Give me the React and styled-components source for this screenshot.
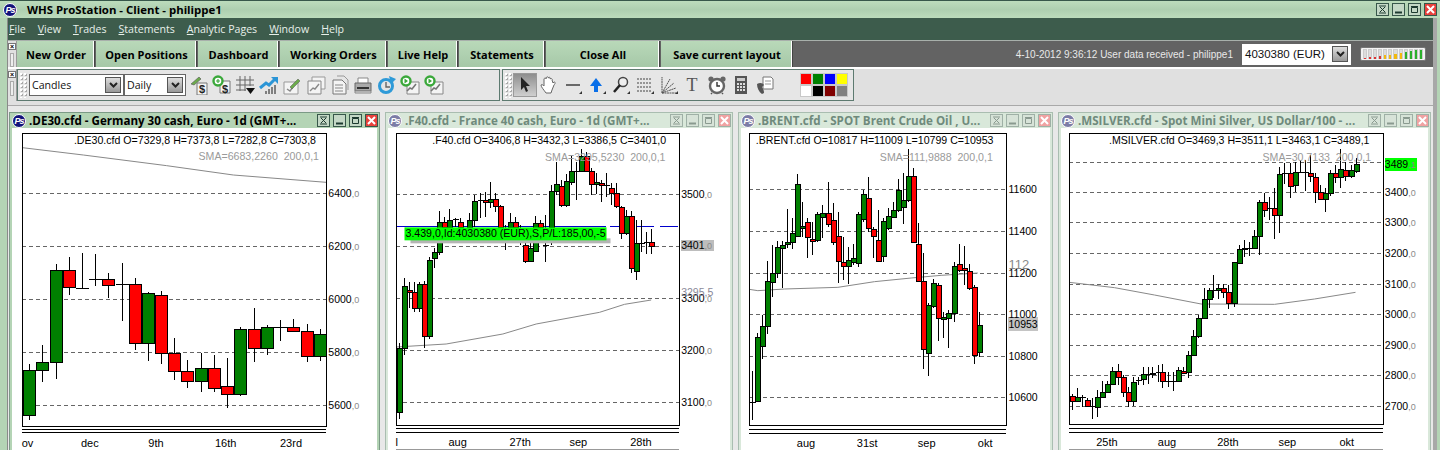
import React from "react";
import styled, { createGlobalStyle } from "styled-components";

const Global = createGlobalStyle`
  html, body { margin: 0; padding: 0; background: #e6e6e6; overflow: hidden; }
  * { box-sizing: border-box; }
`;
const UI = `"Open Sans", "Noto Sans", sans-serif`;
const ARIAL = `"Liberation Sans", Arial, sans-serif`;

const Shell = styled.div`
  width: 1440px; height: 450px; overflow: hidden; display: flex; flex-direction: column;
  background: #b4d4b5; border-top: 1px solid #37574a;
`;
const TitleBar = styled.div`
  height: 17px; flex: none; display: flex; align-items: center; padding: 0 3px 0 3px;
  background: linear-gradient(#bcdcbc, #aecfb0 50%, #bcdcbc);
`;
const AppTitle = styled.div`
  font: 700 11.4px ${UI}; color: #000; margin-left: 10px; flex: 1; white-space: nowrap;
`;
const PsBadge = styled.div`
  width: 14px; height: 14px; flex: none; border-radius: 50%;
  background: ${p => (p.$dim ? "#7c7ca6" : "#12127a")}; color: #fff; border: 1px solid #fff;
  font: italic 700 9px/12px ${ARIAL}; text-align: center; letter-spacing: -1px;
`;
const Controls = styled.div`display: flex; gap: 3px; flex: none;`;
const Ctl = styled.div`
  width: 13px; height: 13px; display: flex; align-items: center; justify-content: center;
  border: 1px solid ${p => (p.$dim ? "#9fb0a6" : "#37574a")};
  background: ${p => (p.$close ? (p.$dim ? "#f0a2a2" : "#e8413c") : p.$dim ? "#d7e3d8" : "#c4d8c6")};
  svg { display: block; }
`;
const Frame = styled.div`
  flex: 1; min-height: 0; display: flex; flex-direction: column; margin: 0 3px 0 7px;
  border-right: 4px solid #a8a8a8; border-left: 1px solid #8a8a8a; background: #e6e6e6;
`;
const MenuBar = styled.div`
  height: 23px; flex: none; background: #3d5c4c; display: flex; align-items: center;
  padding-left: 1px; gap: 12px; color: #e8f0ea; font: 400 10.6px ${UI};
  border-bottom: 1px solid #a8b0ab;
  u { text-underline-offset: 1px; }
`;
const ButtonBar = styled.div`
  height: 28px; flex: none; background: #636363; display: flex; align-items: stretch;
  border-bottom: 2px solid #fff;
`;
const Grip = styled.div`
  width: 9px; flex: none; background: #e0e0e0; border-right: 1px solid #9a9a9a; position: relative;
  display: flex; flex-direction: column; align-items: center; gap: 3px; padding-top: 2px;
`;
const GripX = styled.div`
  width: 8px; height: 7px; border: 1px solid #777; background: #fff; font: 700 7px/5px ${ARIAL}; text-align: center; color: #000;
`;
const GripBar = styled.div`width: 4px; flex: 1; max-height: 15px; border: 1px solid #aaa; background: #eee;`;
const TabBtn = styled.div`
  width: ${p => p.$w}px; flex: none; margin-right: 2px; display: flex; align-items: center; justify-content: center;
  background: linear-gradient(#b9d9b9, #a6c8a8); color: #000; font: 700 11px ${UI};
  border-right: 1px solid #fff; box-shadow: 1px 0 0 #444; white-space: nowrap; padding: 1px 0 0 2px;
`;
const Status = styled.div`
  flex: 1; display: flex; align-items: center; justify-content: flex-end; padding-right: 7px; gap: 9px;
  color: #e9e9e9; font: 400 10px ${ARIAL}; white-space: nowrap;
`;
const Combo = styled.div`
  display: flex; align-items: center; justify-content: space-between; background: #fff; color: #111;
  width: ${p => p.$w}px; height: ${p => p.$h || 21}px; padding: 0 2px 0 2px;
  font: 400 ${p => (p.$arial ? "11.5px" : "10.6px")} ${p => (p.$arial ? ARIAL : UI)};
  border: 1px solid ${p => (p.$line ? "#666" : "#fff")}; flex: none;
`;
const ComboArrow = styled.div`
  width: 16px; height: 16px; flex: none; border: 1px solid #555; background: linear-gradient(#ddd, #999);
  display: flex; align-items: center; justify-content: center;
`;
const Meter = styled.div`
  width: 66px; height: 14px; flex: none; background: #f3f3f3; border: 1px solid #777; border-radius: 2px;
  display: flex; gap: 1px; align-items: flex-end; padding: 1px 2px;
`;
const MeterBar = styled.div`
  flex: 1; height: 100%; background: linear-gradient(to top, ${p => p.$c} ${p => p.$l}%, #ddd ${p => p.$l}%); border: 1px solid #ccc; border-bottom: 0;
`;
const ToolRow = styled.div`
  height: 34px; flex: none; display: flex; background: #e0e0e0; align-items: stretch; padding-bottom: 2px;
`;
const ToolPanel = styled.div`
  width: ${p => p.$w}px; flex: none; display: flex; align-items: center; background: #e6e6e6;
  border: 1px solid #5d7a70; margin-right: 2px; padding-left: 1px;
`;
const Dots = styled.div`
  width: 8px; height: 26px; flex: none; margin-right: ${p => p.$mr}px;
  background-image: radial-gradient(#fff 0.8px, transparent 1px), radial-gradient(#aaa 0.8px, transparent 1px);
  background-size: 4px 4px; background-position: 0 0, 1px 1px;
`;
const Icons = styled.div`display: flex; align-items: center; gap: ${p => p.$gap}px; margin-left: ${p => p.$ml}px;`;
const IconCell = styled.div`
  width: 20px; height: 20px; flex: none; display: flex; align-items: center; justify-content: center;
`;
const Pressed = styled.div`
  width: 24px; height: 24px; flex: none; display: flex; align-items: center; justify-content: center; margin-right: 2px;
  background: linear-gradient(#8e8e8e, #cfcfcf); border: 1px solid #9a9a9a;
`;
const Swatches = styled.div`
  display: grid; grid-template-columns: repeat(4, 10px); grid-auto-rows: 10px; gap: 2px; margin-left: 25px; padding: 1px; background: #c8c8c8;
`;
const Swatch = styled.div`background: ${p => p.$c}; `;
const Gutter = styled.div`
  height: 3px; flex: none; background: #e0e0e0; border-bottom: 1px solid #a9a9a9;
`;
const Workspace = styled.div`
  flex: 1; min-height: 0; display: flex; gap: 5px; padding: 6px 0 0 1px; background: #e8e8e8; align-items: flex-start;
`;
const Win = styled.div`
  width: ${p => p.$w}px; height: 360px; flex: none; display: flex; flex-direction: column;
  background: ${p => (p.$active ? "#b4d4b5" : "#d9e8da")}; border: 1px solid ${p => (p.$active ? "#7b9a86" : "#a9bdb0")}; border-bottom: 0;
`;
const WinTitle = styled.div`
  height: 15px; flex: none; display: flex; align-items: center; padding: 0 1px 0 2px;
`;
const WinText = styled.div`
  flex: 1; margin-left: 3px; font: 700 11.6px ${UI}; white-space: nowrap; overflow: hidden;
  color: ${p => (p.$active ? "#000" : "#6f8a7c")};
`;
const WinBody = styled.div`flex: 1; margin: 0 2px; background: #fff;`;
const ChartSvg = styled.svg`display: block; overflow: hidden;`;
const T = styled.text`font: 400 ${p => p.$s || 10.6}px ${ARIAL}; fill: ${p => p.$c || "#000"}; white-space: pre;`;

const down = <svg width="9" height="7" viewBox="0 0 9 7"><path d="M1 1l3.5 3.5L8 1" fill="none" stroke="#222" strokeWidth="2" /></svg>;
const CtlGlyph = ({ k, c }) => {
  if (k === 0) return <svg width="9" height="9" viewBox="0 0 9 9"><path d="M1 1h7M1 8h7M2 2l5 5M7 2L2 7" stroke={c} fill="none" /></svg>;
  if (k === 1) return <svg width="9" height="9" viewBox="0 0 9 9"><path d="M1 7.5h7" stroke={c} strokeWidth="2" /></svg>;
  if (k === 2) return <svg width="9" height="9" viewBox="0 0 9 9"><path d="M1.5 2.5h6v5h-6zM1 1.5h7" stroke={c} fill="none" /></svg>;
  return <svg width="9" height="9" viewBox="0 0 9 9"><path d="M1 1l7 7M8 1L1 8" stroke="#fff" strokeWidth="2" /></svg>;
};
const WinControls = ({ dim }) => (
  <Controls>
    {[0, 1, 2, 3].map(k => (
      <Ctl key={k} $dim={dim} $close={k === 3}><CtlGlyph k={k} c={dim ? "#8a9a90" : "#1d3a30"} /></Ctl>
    ))}
  </Controls>
);

const S = p => <svg width="20" height="20" viewBox="0 0 20 20" {...p} />;
const Doc = ({ x = 8, y = 6 }) => <path d={`M${x} ${y}h10v12h-10z`} fill="#f4f4f4" stroke="#777" />;
const Dollar = ({ x = 10, y = 17 }) => <text x={x} y={y} fontSize="11" fontWeight="700" fontFamily={ARIAL} fill="#222">$</text>;
const GreenPlus = () => <g><circle cx="6" cy="6" r="4.5" fill="#fff" stroke="#3aa83a" strokeWidth="2.4" /><path d="M4 6h4M6 4v4" stroke="#3aa83a" strokeWidth="1.2" /></g>;
const MiniTrend = () => <path d="M7 16l3-3 2 1 4-5" fill="none" stroke="#777" strokeWidth="1.6" />;
const GreenPlay = () => <g><circle cx="6" cy="6" r="4.5" fill="#fff" stroke="#3aa83a" strokeWidth="2.4" /><path d="M4.5 3.5L8 6l-3.5 2.5z" fill="#3aa83a" /></g>;
const mainIcons = [
  <S><Doc x={9} y={8} /><Dollar x={11} y={18} /><path d="M3 9l8-7 2 2-7 6z" fill="#6cab4b" stroke="#555" strokeWidth=".6" /></S>,
  <S><Doc /><Dollar x={10} y={18} /><GreenPlus /></S>,
  <S><path d="M5 1v15M10 1v15M15 1v10M1 5h18M1 10h18M1 15h10" stroke="#666" /><path d="M11 13h9l-4.5 6z" fill="#111" /></S>,
  <S><path d="M7 19v-3M10 19v-5M13 19v-7M16 19v-9" stroke="#666" strokeWidth="1.6" /><path d="M1 13l6-5 3 2 6-6" fill="none" stroke="#2b95d6" strokeWidth="3" /><path d="M12 2h7v7z" fill="#2b95d6" /></S>,
  <S><path d="M2 7h14v12H2z" fill="#f4f4f4" stroke="#999" /><path d="M5 14l3 2 3-4" fill="none" stroke="#888" strokeWidth="1.5" /><path d="M8 12l8-8 2 2-8 8z" fill="#6cab4b" stroke="#555" strokeWidth=".5" /></S>,
  <S><path d="M6 2h13v12H6z" fill="#f4f4f4" stroke="#999" /><path d="M2 6h13v13H2z" fill="#f4f4f4" stroke="#888" /><path d="M4 16l3-3 2 1 4-5" fill="none" stroke="#888" strokeWidth="1.4" /></S>,
  <S><path d="M3 5h9l4 4v10H3z" fill="#f4f4f4" stroke="#777" /><path d="M7 1h7l4 4v10" fill="none" stroke="#999" /><path d="M5 10h8M5 13h8M5 16h8" stroke="#888" /></S>,
  <S><path d="M5 3h10v6H5z" fill="#fff" stroke="#888" /><path d="M2 8h16v8H2z" fill="#aaa" stroke="#666" /><path d="M4 12h12v2H4z" fill="#333" /><path d="M2 16h16v2H2z" fill="#ddd" stroke="#888" /></S>,
  <S><circle cx="9" cy="11" r="6.5" fill="none" stroke="#2e9ad8" strokeWidth="3" /><path d="M9 7v5h4" fill="none" stroke="#666" strokeWidth="1.4" /><path d="M12 1l7 3-5 5z" fill="#2e9ad8" /></S>,
  <S><path d="M7 7h12v12H7z" fill="#f4f4f4" stroke="#888" /><MiniTrend /><GreenPlay /></S>,
  <S><path d="M7 7h12v12H7z" fill="#f4f4f4" stroke="#888" /><MiniTrend /><GreenPlay /></S>,
];
const Tri = () => <path d="M19 19h-3l3-3z" fill="#333" />;
const drawIcons = [
  <S><path d="M7 18c-2-3-5-6-5-8 1-1 2 0 3 1V4c1-2 2-1 2 0V3c1-2 3-1 2 0 1-1 3-1 2 1 1-1 3 0 2 1l1 3 1-1c2 0 1 2 0 3l-2 5-1 3z" fill="#fff" stroke="#666" /></S>,
  <S><path d="M3 10h14" stroke="#333" strokeWidth="1.4" /><Tri /></S>,
  <S><path d="M9 3l6 8h-4v6H7v-6H3z" fill="#0a6fe8" /><Tri /></S>,
  <S><circle cx="12" cy="7" r="4.5" fill="#eee" stroke="#444" strokeWidth="1.5" /><path d="M9 10l-6 7" stroke="#222" strokeWidth="2.5" /><Tri /></S>,
  <S><path d="M2 4h15M2 8h15M2 12h15M2 16h15" stroke="#444" strokeDasharray="2 1" /><Tri /></S>,
  <S><path d="M3 18V2M3 18L11 4M3 18L15 8M3 18L17 13M3 18h15" stroke="#555" strokeDasharray="2 .5" fill="none" /><Tri /></S>,
  <S><text x="3.5" y="16" fontFamily="'Liberation Serif', serif" fontSize="18" fill="#555">T</text></S>,
  <S><circle cx="10" cy="11" r="7" fill="#fff" stroke="#666" strokeWidth="2.4" /><path d="M10 7v4h3" stroke="#333" fill="none" strokeWidth="1.4" /><circle cx="4" cy="4" r="2.6" fill="#666" /><circle cx="16" cy="4" r="2.6" fill="#666" /><path d="M5 18l-1 1M15 18l1 1" stroke="#555" strokeWidth="1.6" /></S>,
  <S><path d="M4 1h12v18H4z" fill="#555" /><path d="M6 3h8v3H6z" fill="#ccc" /><path d="M6 8h2v2H6zM9 8h2v2H9zM12 8h2v2h-2zM6 11h2v2H6zM9 11h2v2H9zM12 11h2v2h-2zM6 14h2v2H6zM9 14h2v2H9zM12 14h2v2h-2z" fill="#ddd" /></S>,
  <S><path d="M8 2h8l2 2v10H8z" fill="#fff" stroke="#777" /><path d="M10 6h6M10 9h6" stroke="#999" /><path d="M2 9c3-2 6-1 7 1l-2 2c1 2 2 3 2 6l-2 1c-3-2-5-6-5-10z" fill="#555" /></S>,
];
const swatches = ["#ff0000", "#008000", "#0000ff", "#ffff00", "#ffffff", "#000000", "#800000", "#808080"];
const meter = [["#d33", 14], ["#d33", 22], ["#d33", 25], ["#d33", 33], ["#f2b90f", 45], ["#f2b90f", 50], ["#f2b90f", 60], ["#f2b90f", 70], ["#2bb02b", 80], ["#2bb02b", 90], ["#2bb02b", 95], ["#2bb02b", 100]];

/* candle data in the reference's 3x-zoom coordinates: [x, wickTop, bodyTop, bodyBottom, wickBottom, kind] */
const c1 = [[87,778,796,931,945,"g"],[127,720,772,796,830,"g"],[167,478,496,772,822,"g"],[207,457,496,547,570,"r"],[246,444,548,548,550,"d"],[285,447,523,523,542,"d"],[325,505,523,539,578,"r"],[365,475,536,536,647,"d"],[405,520,536,715,735,"r"],[444,560,563,715,768,"g"],[483,558,571,745,776,"r"],[523,700,745,799,824,"r"],[562,765,799,829,848,"r"],[602,744,790,829,860,"g"],[642,750,790,850,860,"r"],[681,760,844,868,908,"r"],[721,665,673,868,872,"g"],[761,610,673,730,770,"r"],[801,660,667,730,750,"g"],[841,645,667,667,708,"d"],[880,642,667,677,680,"r"],[921,657,677,754,770,"r"],[960,672,688,754,768,"g"]];
const c2 = [[57,715,728,922,942,"g"],[72,520,542,728,750,"g"],[88,530,556,562,610,"r"],[102,530,562,610,622,"r"],[117,530,538,610,620,"g"],[132,528,538,694,728,"r"],[147,455,464,694,702,"g"],[162,430,440,458,490,"g"],[177,318,350,440,450,"g"],[192,335,350,365,400,"r"],[209,312,344,365,400,"g"],[225,338,342,342,365,"d"],[240,340,350,365,400,"r"],[268,325,346,365,400,"g"],[284,270,289,346,365,"g"],[300,265,285,285,340,"d"],[315,262,285,291,335,"r"],[330,232,281,291,310,"g"],[345,265,281,304,320,"r"],[360,300,304,365,400,"r"],[377,360,400,400,435,"d"],[390,325,352,365,400,"g"],[405,335,352,365,400,"r"],[420,360,400,400,420,"d"],[435,410,420,467,475,"r"],[450,410,428,467,472,"g"],[465,332,355,437,440,"g"],[480,345,355,365,400,"r"],[495,330,420,420,470,"d"],[513,240,259,365,420,"g"],[528,172,238,259,270,"g"],[543,225,244,299,305,"r"],[558,207,229,299,305,"g"],[573,152,199,232,240,"g"],[588,170,199,199,285,"d"],[603,132,152,199,200,"g"],[618,140,152,199,200,"r"],[633,190,199,238,270,"r"],[648,205,232,238,268,"g"],[663,225,235,241,292,"r"],[680,203,241,241,275,"d"],[693,235,250,265,300,"r"],[708,235,265,304,310,"r"],[723,303,307,383,402,"r"],[738,315,334,383,390,"g"],[754,318,334,490,505,"r"],[770,345,415,499,525,"g"],[785,345,414,414,440,"d"],[800,380,412,412,447,"d"],[815,372,412,422,447,"r"]];
const c3 = [[51,798,892,892,944,"d"],[66,685,697,887,890,"g"],[81,630,662,722,762,"g"],[96,468,527,664,686,"g"],[111,420,505,532,576,"g"],[126,408,427,503,520,"g"],[141,408,421,428,550,"g"],[156,312,412,418,430,"g"],[171,340,385,412,432,"g"],[186,208,238,394,395,"g"],[201,292,362,368,395,"g"],[216,340,350,397,458,"r"],[232,350,403,409,450,"r"],[248,320,328,406,410,"g"],[263,300,323,337,400,"g"],[279,232,323,358,365,"r"],[294,295,344,412,420,"r"],[309,320,392,469,533,"r"],[324,395,471,484,525,"r"],[339,425,464,484,537,"g"],[354,418,458,472,480,"g"],[369,320,328,475,485,"g"],[384,255,268,342,350,"g"],[399,216,280,369,382,"r"],[414,365,373,394,458,"r"],[429,315,406,468,470,"r"],[444,340,347,454,470,"g"],[459,310,334,370,375,"g"],[474,290,316,337,340,"g"],[489,222,254,316,320,"g"],[504,203,284,307,356,"g"],[519,132,212,286,290,"g"],[534,190,214,412,413,"r"],[549,355,416,529,530,"r"],[564,445,527,733,792,"r"],[579,595,599,745,812,"g"],[594,522,533,604,610,"g"],[609,535,541,640,708,"r"],[625,620,637,643,700,"g"],[641,615,625,640,728,"g"],[657,470,482,623,650,"g"],[672,417,476,495,500,"r"],[687,424,490,495,540,"r"],[702,478,497,550,555,"r"],[717,540,545,751,776,"r"],[732,622,659,742,756,"g"]];
const c4 = [[51,868,874,888,914,"r"],[66,850,877,889,892,"g"],[81,870,877,877,905,"d"],[96,880,884,902,905,"r"],[112,880,904,904,942,"d"],[126,855,877,907,935,"g"],[141,828,862,877,880,"g"],[157,828,838,862,865,"g"],[173,785,799,838,840,"g"],[189,778,799,815,840,"r"],[204,810,817,862,875,"r"],[219,845,862,889,905,"r"],[234,815,832,889,902,"g"],[249,815,824,824,840,"d"],[264,785,808,823,840,"g"],[279,785,808,808,838,"d"],[293,785,803,807,820,"g"],[309,780,800,800,830,"d"],[323,778,800,829,848,"r"],[339,800,827,827,845,"d"],[355,800,827,827,857,"d"],[369,785,794,829,832,"g"],[385,785,797,804,806,"r"],[400,737,749,802,818,"g"],[416,675,694,749,750,"g"],[431,630,640,694,700,"g"],[447,550,583,640,642,"g"],[462,550,556,583,610,"g"],[475,510,556,556,580,"d"],[491,538,550,556,582,"g"],[506,538,550,562,580,"r"],[521,540,562,593,612,"r"],[537,470,472,593,605,"g"],[552,420,433,474,476,"g"],[567,405,428,433,455,"g"],[582,410,428,428,452,"d"],[597,375,394,428,430,"g"],[612,285,292,394,450,"g"],[628,265,292,314,335,"r"],[644,275,310,310,345,"d"],[659,250,308,331,402,"r"],[674,185,208,331,385,"g"],[689,175,204,204,237,"d"],[705,175,204,242,278,"r"],[720,170,200,241,262,"g"],[735,165,200,200,205,"d"],[750,165,202,202,258,"d"],[765,150,203,214,230,"r"],[780,205,217,262,295,"r"],[795,240,262,283,285,"r"],[810,250,263,283,322,"g"],[825,195,205,263,272,"g"],[840,180,205,217,235,"r"],[855,133,193,217,248,"g"],[871,170,195,214,228,"r"],[888,180,195,214,218,"g"],[903,160,178,197,205,"g"]];

const Chart = ({ d, w }) => {
  const X = z => z / 3 + d.ox;
  const Y = z => z / 3 + d.oy;
  const px = v => Math.round(v) + 0.5;
  const box = d.box;
  const bw = d.bw;
  const line = pts => pts.map(([x, y]) => `${X(x)},${Y(y)}`).join(" ");
  return (
    <ChartSvg width={w} height={322} viewBox={`0 0 ${w} 322`}>
      <g shapeRendering="crispEdges">
        {d.grid.map(y => <line key={y} x1={X(box[0])} x2={X(box[1])} y1={px(Y(y))} y2={px(Y(y))} stroke="#666" strokeDasharray="4 3" />)}
      </g>
      <polyline points={line(d.sma)} fill="none" stroke="#888" strokeWidth="1" />
      {d.blue && <g shapeRendering="crispEdges">{d.blue.map(([a, b]) => <line key={a} x1={X(a)} x2={X(b)} y1={px(Y(364))} y2={px(Y(364))} stroke="#0000cc" />)}</g>}
      <g shapeRendering="crispEdges">
        {d.candles.map(([x, wt, t, b, wb, k]) => {
          const cx = Math.round(X(x));
          const left = cx - Math.floor(bw / 2);
          const h = Math.max(Math.round(Y(b)) - Math.round(Y(t)), 0);
          return (
            <g key={x}>
              <line x1={cx + 0.5} x2={cx + 0.5} y1={Y(wt)} y2={Y(wb)} stroke="#000" />
              {k === "d"
                ? <line x1={left} x2={left + bw + 1} y1={px(Y(t))} y2={px(Y(t))} stroke="#000" />
                : <rect x={left + 0.5} y={Math.round(Y(t)) + 0.5} width={bw} height={h} fill={k === "g" ? "#008000" : "#ff0000"} stroke="#000" />}
            </g>
          );
        })}
        <rect x={px(X(box[0]))} y={px(Y(box[2]))} width={Math.round((box[1] - box[0]) / 3)} height={Math.round((box[3] - box[2]) / 3)} fill="none" stroke="#000" />
        {d.dbl.map(y => <line key={y} x1={X(box[0])} x2={X(box[1])} y1={px(Y(y))} y2={px(Y(y))} stroke="#000" />)}
        {d.base && <line x1={X(box[0])} x2={X(box[1])} y1={321.5} y2={321.5} stroke="#999" />}
      </g>
      {d.hl && d.hl.map(r => <rect key={r.x} x={X(r.x)} y={Y(r.y)} width={r.w / 3} height={r.h / 3} fill={r.c} shapeRendering="crispEdges" />)}
      {d.axis.map(([label, y]) => (
        <T key={label} x={X(d.ax)} y={Y(y) + 4} $s={10.5}>
          {label}{d.dec && <tspan fill="#8a8a8a" fontSize="9">,0</tspan>}
        </T>
      ))}
      {d.extra && d.extra.map(e => <T key={e.t} x={X(e.x)} y={Y(e.y)} $s={e.s || 10.5} $c={e.c}>{e.t}{e.tail && <tspan fill="#8a8a8a" fontSize="9">{e.tail}</tspan>}</T>)}
      <T x={X(d.head[1])} y={Y(d.head[2])} textAnchor="end">{d.head[0]}</T>
      <T x={X(d.smaT[1])} y={Y(d.smaT[2])} textAnchor="end" $c="#9a9a9a">{d.smaT[0]}</T>
      {d.tag && (
        <g>
          <rect x={X(93)} y={Y(400)} width={200} height={5} fill="#b5b5b5" />
          <rect x={X(75)} y={Y(367)} width={202} height={13} fill="#00ff00" />
          <T x={X(78)} y={Y(396)}>3.439,0,Id:4030380 (EUR),S,P/L:185,00,-5</T>
        </g>
      )}
      {d.xl.map(([t, x]) => <T key={t} x={X(x)} y={Y(d.xy)} $s={11}>{t}</T>)}
    </ChartSvg>
  );
};

const windows = [
  { title: ".DE30.cfd - Germany 30 cash, Euro - 1d (GMT+...", w: 371, active: true, d: {
    ox: 0 - 12, oy: 105 - 128, box: [67, 979, 83, 961], bw: 12, candles: c1, grid: [265, 424, 583, 742, 901],
    sma: [[67,128],[250,150],[500,182],[700,210],[979,232]], dbl: [972, 980], ax: 985, dec: true,
    axis: [["6400",265],["6200",424],["6000",583],["5800",742],["5600",901]],
    head: [".DE30.cfd O=7329,8 H=7373,8 L=7282,8 C=7303,8", 948, 116], smaT: ["SMA=6683,2260  200,0,1", 957, 165],
    xl: [["ov",65],["dec",243],["9th",445],["16th",645],["23rd",840]], xy: 1025 } },
  { title: ".F40.cfd - France 40 cash, Euro - 1d (GMT+...", w: 348, d: {
    ox: 380 - 388.5, oy: 105 - 128, box: [50, 898, 83, 958], bw: 5, base: true, candles: c2, grid: [268, 424, 580, 736, 892],
    sma: [[50,726],[200,717],[370,687],[470,657],[660,622],[735,598],[815,585]], dbl: [970, 980], ax: 905, dec: true,
    blue: [[50,680],[692,750],[770,822],[840,895]], tag: true,
    hl: [{ x: 903, y: 405, w: 99, h: 33, c: "#bdbdbd" }],
    axis: [["3500",268],["3401",421],["3300",580],["3200",736],["3100",892]],
    extra: [{ t: "3295,5", x: 905, y: 573, c: "#8a8a9a" }],
    head: [".F40.cfd O=3406,8 H=3432,3 L=3386,5 C=3401,0", 860, 116], smaT: ["SMA=3295,5230  200,0,1", 858, 167],
    xl: [["l",48],["aug",207],["27th",390],["sep",570],["28th",752]], xy: 1022 } },
  { title: ".BRENT.cfd - SPOT Brent Crude Oil , U...", w: 315, d: {
    ox: 735 - 741.5, oy: 105 - 128, box: [44, 814, 85, 960], bw: 5, candles: c3, grid: [253, 379, 503, 628, 754, 877],
    sma: [[44,553],[70,557],[150,552],[310,547],[420,530],[530,519],[620,511],[730,504]], dbl: [972, 983], ax: 822,
    hl: [{ x: 819, y: 636, w: 92, h: 41, c: "#c4c4c4" }],
    axis: [["11600",253],["11400",379],["11200",503],["11000",628],["10953",657],["10800",754],["10600",877]],
    extra: [{ t: "112", x: 822, y: 493, c: "#8a8a8a", s: 13 }],
    head: [".BRENT.cfd O=10817 H=11009 L=10799 C=10953", 777, 118], smaT: ["SMA=111,9888  200,0,1", 775, 169],
    xl: [["aug",187],["31st",367],["sep",550],["okt",730]], xy: 1027 } },
  { title: ".MSILVER.cfd - Spot Mini Silver, US Dollar/100 - ...", w: 373, d: {
    ox: 1055 - 1061.5, oy: 105 - 128, box: [44, 985, 85, 957], bw: 5, base: true, candles: c4, grid: [170, 262, 352, 445, 536, 628, 720, 811, 903],
    sma: [[44,532],[180,548],[300,570],[440,597],[660,598],[780,582],[903,562]], dbl: [970, 980], ax: 991, dec: true,
    hl: [{ x: 990, y: 160, w: 98, h: 37, c: "#00ff00" }],
    axis: [["3400",262],["3300",352],["3200",445],["3100",536],["3000",628],["2900",720],["2800",811],["2700",903]],
    extra: [{ t: "3489", tail: ",1", x: 991, y: 190 }],
    head: [".MSILVER.cfd O=3469,3 H=3511,1 L=3463,1 C=3489,1", 945, 118], smaT: ["SMA=30,7133  200,0,1", 950, 168],
    xl: [["25th",125],["aug",310],["28th",488],["sep",672],["okt",855]], xy: 1022 } },
];

const U = ({ c, r }) => <span><u>{c}</u>{r}</span>;

export default function App() {
  return (
    <Shell>
      <Global />
      <TitleBar>
        <PsBadge>Ps</PsBadge>
        <AppTitle>WHS ProStation - Client - philippe1</AppTitle>
        <WinControls />
      </TitleBar>
      <Frame>
        <MenuBar>
          <U c="F" r="ile" /><U c="V" r="iew" /><U c="T" r="rades" /><U c="S" r="tatements" /><U c="A" r="nalytic Pages" /><U c="W" r="indow" /><U c="H" r="elp" />
        </MenuBar>
        <ButtonBar>
          <Grip><GripX>×</GripX><GripBar /></Grip>
          {[["New Order", 77], ["Open Positions", 100], ["Dashboard", 80], ["Working Orders", 106], ["Live Help", 69], ["Statements", 85], ["Close All", 113], ["Save current layout", 131]].map(([t, w]) => (
            <TabBtn key={t} $w={w}>{t}</TabBtn>
          ))}
          <Status>
            <span>4-10-2012 9:36:12 User data received - philippe1</span>
            <Combo $w={109} $arial>4030380 (EUR)<ComboArrow>{down}</ComboArrow></Combo>
            <Meter>{meter.map(([c, l], i) => <MeterBar key={i} $c={c} $l={l} />)}</Meter>
          </Status>
        </ButtonBar>
        <ToolRow>
          <Grip><GripX>×</GripX><GripBar /></Grip>
          <ToolPanel $w={483}>
            <Dots $mr={2} />
            <Combo $w={95} $h={22} $line>Candles<ComboArrow>{down}</ComboArrow></Combo>
            <Combo $w={62} $h={22} $line>Daily<ComboArrow>{down}</ComboArrow></Combo>
            <Icons $gap={3.6} $ml={2}>{mainIcons.map((ic, i) => <IconCell key={i}>{ic}</IconCell>)}</Icons>
          </ToolPanel>
          <ToolPanel $w={352}>
            <Dots $mr={1} />
            <Pressed><svg width="12" height="18" viewBox="0 0 12 18"><path d="M2 1v13l3-3 2 5 2-1-2-5h4z" fill="#222" /></svg></Pressed>
            <Icons $gap={4} $ml={0}>{drawIcons.map((ic, i) => <IconCell key={i}>{ic}</IconCell>)}</Icons>
            <Swatches>{swatches.map(c => <Swatch key={c} $c={c} />)}</Swatches>
          </ToolPanel>
        </ToolRow>
        <Gutter />
        <Workspace>
          {windows.map(win => (
            <Win key={win.title} $w={win.w} $active={win.active}>
              <WinTitle>
                <PsBadge $dim={!win.active}>Ps</PsBadge>
                <WinText $active={win.active}>{win.title}</WinText>
                <WinControls dim={!win.active} />
              </WinTitle>
              <WinBody><Chart d={win.d} w={win.w - 6} /></WinBody>
            </Win>
          ))}
        </Workspace>
      </Frame>
    </Shell>
  );
}
